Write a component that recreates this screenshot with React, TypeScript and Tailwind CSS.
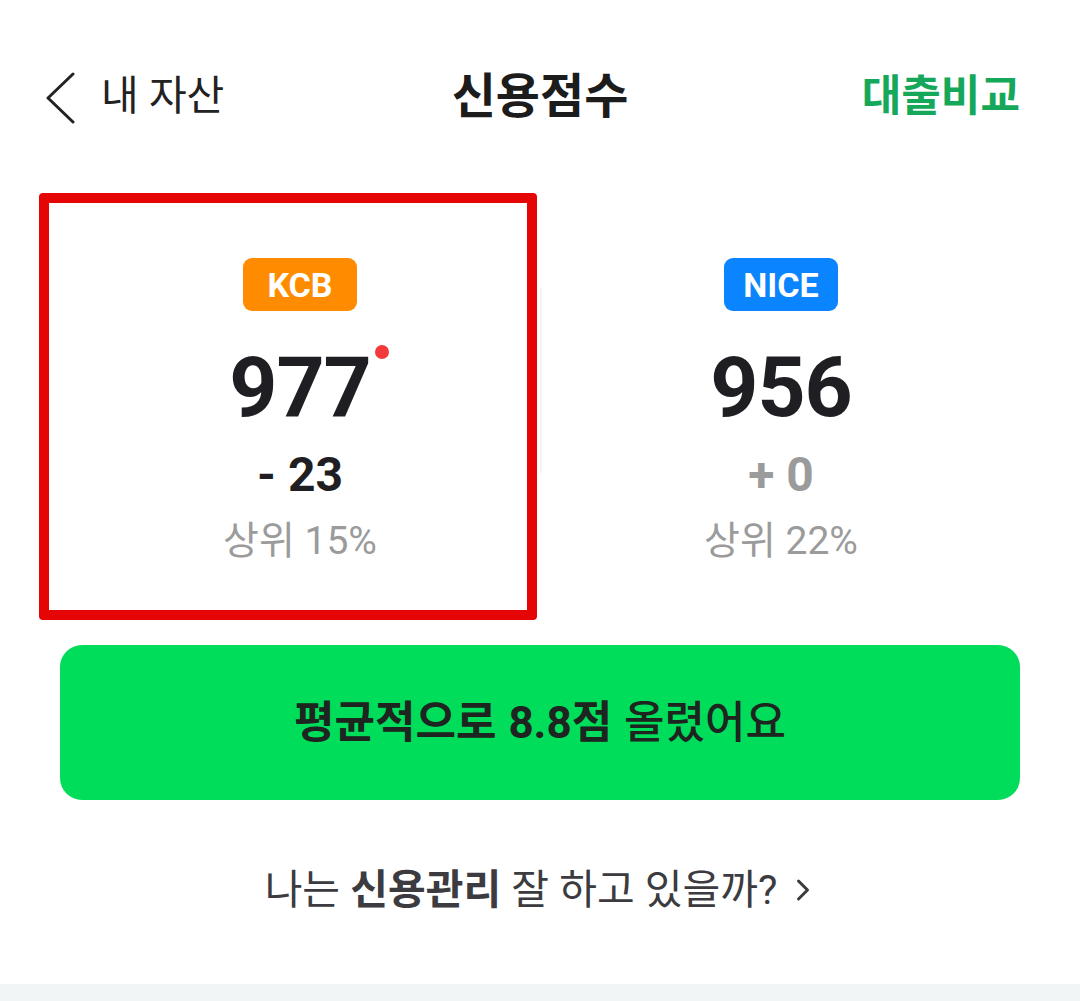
import { ChevronRight } from "lucide-react";

interface ScoreProps {
  bureau: string;
  badgeClass: string;
  score: number;
  change: string;
  changeClass: string;
  rank: string;
  isNew?: boolean;
}

function ScoreColumn({ bureau, badgeClass, score, change, changeClass, rank, isNew }: ScoreProps) {
  return (
    <div className="flex flex-col items-center pt-[65px]">
      <div
        className={`flex h-[53px] w-[114px] items-center justify-center rounded-[9px] text-[34px] font-bold leading-none text-white ${badgeClass}`}
      >
        {bureau}
      </div>
      <div className="mt-[35px] text-[84px] font-bold leading-[84px] tracking-[-1px] text-[#1f1f23]">
        <span className="relative">
          {score}
          {isNew && <span className="absolute -right-[18px] top-[7px] h-[14px] w-[14px] rounded-full bg-[#f23a3a]" />}
        </span>
      </div>
      <div className={`mt-[21px] text-[48px] font-bold leading-[48px] ${changeClass}`}>{change}</div>
      <div className="mt-[23px] text-[39px] leading-[38px] text-[#9b9b9b]">{rank}</div>
    </div>
  );
}

export default function App() {
  return (
    <div className="flex h-[1001px] w-[1080px] flex-col bg-white font-['Roboto','Noto_Sans_CJK_KR',sans-serif] text-[#222]">
      {/* header */}
      <div className="relative flex h-[193px] items-center justify-between pl-[44px] pr-[60px]">
        <div className="flex items-center">
          <svg width="32" height="52" viewBox="0 0 32 52" fill="none" className="mt-[2px]">
            <path d="M29 2 L4 26 L29 50" stroke="#222" strokeWidth="3" strokeLinecap="round" strokeLinejoin="round" />
          </svg>
          <span className="ml-[25px] text-[41px] leading-none text-[#222]">내 자산</span>
        </div>
        <div className="absolute left-1/2 -translate-x-1/2 text-[48px] font-bold leading-none text-[#1c1c1c]">신용점수</div>
        <div className="text-[43px] font-bold leading-none text-[#16a85a]">대출비교</div>
      </div>

      {/* scores */}
      <div className="flex h-[427px] px-[60px]">
        <div className="relative w-[480px]">
          <ScoreColumn
            bureau="KCB"
            badgeClass="bg-[#ff8c00]"
            score={977}
            change="- 23"
            changeClass="text-[#1f1f23]"
            rank="상위 15%"
            isNew
          />
          <div className="pointer-events-none absolute -left-[21px] right-[3px] top-0 bottom-0 rounded-[4px] border-[10px] border-[#e60505]" />
        </div>
        <div className="mt-[95px] h-[185px] w-[2px] bg-[#f2f4f5]" />
        <div className="flex-1">
          <ScoreColumn
            bureau="NICE"
            badgeClass="bg-[#0a84ff]"
            score={956}
            change="+ 0"
            changeClass="text-[#9b9b9b]"
            rank="상위 22%"
          />
        </div>
      </div>

      {/* summary */}
      <div className="px-[60px] pt-[25px]">
        <div className="flex h-[155px] items-center justify-center rounded-[22px] bg-[#00dd5a] text-[44px] leading-none text-[#1e2420]">
          <span className="font-semibold">평균적으로</span>
          <span className="ml-[12px] font-bold">8.8점</span>
          <span className="ml-[12px] font-medium">올렸어요</span>
        </div>
      </div>

      <div className="flex flex-1 items-center justify-center pb-[4px] pl-[6px]">
        <span className="text-[41px] leading-none text-[#3b3b40]">
          나는 <span className="font-bold">신용관리</span> 잘 하고 있을까?
        </span>
        <ChevronRight className="ml-[8px] h-[36px] w-[36px] text-[#3b3b40]" strokeWidth={2} />
      </div>

      <div className="h-[17px] bg-[#f2f5f6]" />
    </div>
  );
}
